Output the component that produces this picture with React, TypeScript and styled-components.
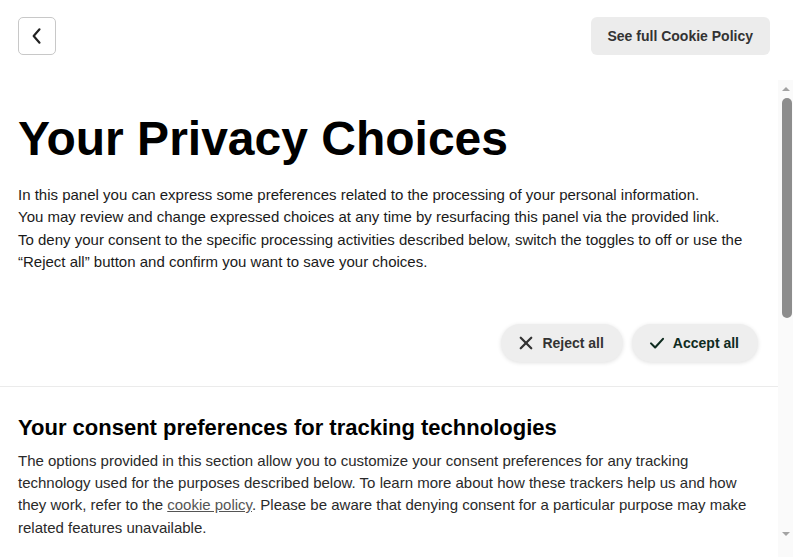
import React from 'react';
import styled, { createGlobalStyle } from 'styled-components';

const GlobalStyle = createGlobalStyle`
  html, body {
    margin: 0;
    padding: 0;
    height: 100%;
    background: #ffffff;
    overflow: hidden;
  }
  body {
    font-family: 'Liberation Sans', Arial, sans-serif;
    color: #111;
  }
  #root {
    height: 100%;
  }
`;

const Page = styled.div`
  display: flex;
  flex-direction: column;
  height: 557px;
`;

const Header = styled.header`
  display: flex;
  align-items: flex-start;
  justify-content: space-between;
  padding: 17px 23px 0 18px;
  height: 63px;
  box-sizing: border-box;
  flex-shrink: 0;
`;

const BackButton = styled.button`
  width: 38px;
  height: 38px;
  border: 1px solid #c8c8c8;
  border-radius: 5px;
  background: #fff;
  display: flex;
  align-items: center;
  justify-content: center;
  padding: 0;
  cursor: pointer;
  color: #222;
`;

const PolicyButton = styled.button`
  height: 38px;
  padding: 0 17px;
  border: none;
  border-radius: 6px;
  background: #ececec;
  font-family: 'Liberation Sans', Arial, sans-serif;
  font-size: 14px;
  font-weight: 700;
  color: #333;
  cursor: pointer;
`;

const Body = styled.div`
  flex: 1;
  display: flex;
  margin-top: 17px;
  min-height: 0;
`;

const Content = styled.div`
  flex: 1;
  overflow: hidden;
`;

const Rail = styled.div`
  width: 15px;
  flex-shrink: 0;
  background: #fafafa;
  display: flex;
  flex-direction: column;
  align-items: center;
  padding-bottom: 15px;
`;

const Arrow = styled.div<{ $down?: boolean }>`
  height: 17px;
  width: 15px;
  display: flex;
  align-items: center;
  justify-content: center;
  flex-shrink: 0;
  &::before {
    content: '';
    width: 0;
    height: 0;
    border-left: 4px solid transparent;
    border-right: 4px solid transparent;
    ${(p) =>
      p.$down ? 'border-top: 4px solid #a3a3a3;' : 'border-bottom: 4px solid #a3a3a3;'}
  }
`;

const Thumb = styled.div`
  width: 10px;
  height: 220px;
  margin-top: 1px;
  margin-left: 2px;
  border-radius: 5px;
  background: #8d8d8d;
`;

const RailSpace = styled.div`
  flex: 1;
`;

const Section = styled.section<{ $divider?: boolean }>`
  padding: ${(p) => (p.$divider ? '28px 20px 0 18px' : '31px 20px 24px 18px')};
  border-top: ${(p) => (p.$divider ? '1px solid #ebebeb' : 'none')};
`;

const Title = styled.h1`
  margin: 0 0 17px;
  font-size: 48px;
  font-weight: 700;
  line-height: 56px;
  color: #000;
`;

const SubTitle = styled.h2`
  margin: 0 0 9px;
  font-size: 22px;
  font-weight: 700;
  line-height: 26px;
  color: #000;
`;

const Text = styled.p<{ $soft?: boolean }>`
  margin: 0;
  font-size: 15px;
  line-height: 22.4px;
  color: ${(p) => (p.$soft ? '#2a2a2a' : '#1a1a1a')};
`;

const Link = styled.a`
  color: #555;
  text-decoration: underline;
`;

const Actions = styled.div`
  display: flex;
  justify-content: flex-end;
  gap: 9px;
  margin-top: 50px;
`;

const Pill = styled.button<{ $accept?: boolean }>`
  height: 38px;
  display: flex;
  align-items: center;
  gap: 7px;
  padding: 0 19px 0 16px;
  border: none;
  border-radius: 19px;
  background: #eeeeee;
  box-shadow: 0 1px 4px rgba(0, 0, 0, 0.12);
  font-family: 'Liberation Sans', Arial, sans-serif;
  font-size: 14px;
  font-weight: 700;
  color: ${(p) => (p.$accept ? '#0e2b1f' : '#333')};
  cursor: pointer;
`;

export default function App() {
  return (
    <Page>
      <GlobalStyle />
      <Header>
        <BackButton aria-label="Back">
          <svg width="20" height="20" viewBox="0 0 24 24" fill="none" stroke="currentColor" strokeWidth="2.6" strokeLinecap="round" strokeLinejoin="round">
            <polyline points="15 4 8 12 15 20" />
          </svg>
        </BackButton>
        <PolicyButton>See full Cookie Policy</PolicyButton>
      </Header>
      <Body>
        <Content>
          <Section>
            <Title>Your Privacy Choices</Title>
            <Text>
              In this panel you can express some preferences related to the processing of your personal information.
              <br />
              You may review and change expressed choices at any time by resurfacing this panel via the provided link.
              <br />
              To deny your consent to the specific processing activities described below, switch the toggles to off or use the
              “Reject all” button and confirm you want to save your choices.
            </Text>
            <Actions>
              <Pill>
                <svg width="18" height="18" viewBox="0 0 24 24" fill="none" stroke="currentColor" strokeWidth="3" strokeLinecap="round">
                  <line x1="5" y1="5" x2="19" y2="19" />
                  <line x1="19" y1="5" x2="5" y2="19" />
                </svg>
                Reject all
              </Pill>
              <Pill $accept>
                <svg width="18" height="18" viewBox="0 0 24 24" fill="none" stroke="currentColor" strokeWidth="2.8" strokeLinecap="round" strokeLinejoin="round">
                  <polyline points="4 12.5 9.5 18 20 6.5" />
                </svg>
                Accept all
              </Pill>
            </Actions>
          </Section>
          <Section $divider>
            <SubTitle>Your consent preferences for tracking technologies</SubTitle>
            <Text $soft>
              The options provided in this section allow you to customize your consent preferences for any tracking
              technology used for the purposes described below. To learn more about how these trackers help us and how
              they work, refer to the <Link href="#">cookie policy</Link>. Please be aware that denying consent for a
              particular purpose may make related features unavailable.
            </Text>
          </Section>
        </Content>
        <Rail aria-hidden="true">
          <Arrow />
          <Thumb />
          <RailSpace />
          <Arrow $down />
        </Rail>
      </Body>
    </Page>
  );
}
